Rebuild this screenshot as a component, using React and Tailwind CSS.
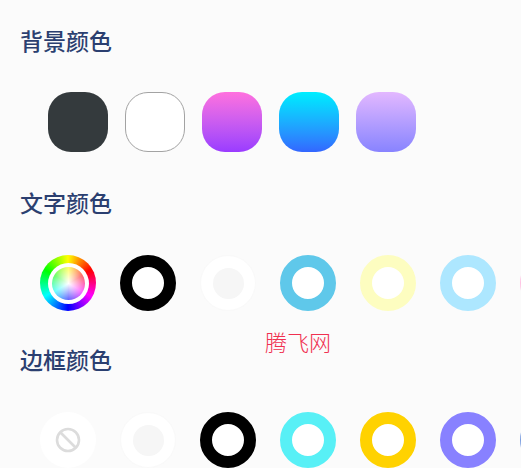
const bgSwatches = [
    'bg-[#343a3d]',
    'bg-white border border-[#a3a3a3]',
    'bg-gradient-to-b from-[#ff70de] to-[#9a3bff]',
    'bg-gradient-to-b from-[#00eeff] to-[#3366ff]',
    'bg-gradient-to-b from-[#e3b7ff] to-[#8883ff]',
];

const textRings = ['border-black', 'border-[#5fc8ea]', 'border-[#fdfdc0]', 'border-[#ade7ff]', 'border-[#ffc4e4]'];
const borderRings = ['border-black', 'border-[#58f0f6]', 'border-[#ffd200]', 'border-[#8881ff]', 'border-[#7d9fe0]'];

const Heading = ({ children, className }) => (
    <h2 className={`pl-5 text-[23px] leading-[30px] font-medium text-[#2b3f70] ${className}`}>{children}</h2>
);

const Ring = ({ color }) => (
    <div className={`w-14 h-14 shrink-0 rounded-full bg-white border-[12.5px] ${color}`} />
);

const BlankRing = () => (
    <div className="w-14 h-14 shrink-0 rounded-full bg-white border border-[#f9f9f9] flex items-center justify-center">
        <div className="w-[31px] h-[31px] rounded-full bg-[#f6f6f6]" />
    </div>
);

const WheelRing = () => (
    <div className="w-14 h-14 shrink-0 rounded-full flex items-center justify-center bg-[conic-gradient(#ffff00,#ff0000,#ff00ff,#0000ff,#00ffff,#00ff00,#ffff00)]">
        <div className="w-[41px] h-[41px] rounded-full bg-white flex items-center justify-center">
            <div className="w-[33px] h-[33px] rounded-full bg-[radial-gradient(circle,#ffffff_0%,#ffffff22_100%),conic-gradient(#ffff00,#ff0000,#ff00ff,#0000ff,#00ffff,#00ff00,#ffff00)]" />
        </div>
    </div>
);

const NoneRing = () => (
    <div className="w-14 h-14 shrink-0 rounded-full bg-white flex items-center justify-center">
        <svg width="26" height="26" viewBox="0 0 26 26" fill="none" stroke="#dcdcdc" strokeWidth="2.6">
            <circle cx="13" cy="13" r="11" />
            <path d="M5.5 5.5L20.5 20.5" />
        </svg>
    </div>
);

export default function App() {
    return (
        <div className="relative w-[521px] h-[468px] overflow-hidden bg-[#fbfbfb] font-['Noto_Sans_CJK_SC','Noto_Sans',sans-serif]">
            <Heading className="pt-[25px]">背景颜色</Heading>
            <div className="flex gap-[17px] pl-12 mt-[37px]">
                {bgSwatches.map((swatch, i) => (
                    <div key={i} className={`w-[60px] h-[60px] rounded-[23px] ${swatch}`} />
                ))}
            </div>

            <Heading className="mt-[35px]">文字颜色</Heading>
            <div className="flex gap-6 pl-10 mt-[38px]">
                <WheelRing />
                <Ring color={textRings[0]} />
                <BlankRing />
                {textRings.slice(1).map((color) => <Ring key={color} color={color} />)}
            </div>

            <Heading className="mt-[33px]">边框颜色</Heading>
            <div className="flex gap-6 pl-10 mt-[38px]">
                <NoneRing />
                <BlankRing />
                {borderRings.map((color) => <Ring key={color} color={color} />)}
            </div>

            <div className="absolute left-[265px] top-[326px] text-[22px] leading-[30px] font-light text-[#f03050]">腾飞网</div>
        </div>
    );
}
